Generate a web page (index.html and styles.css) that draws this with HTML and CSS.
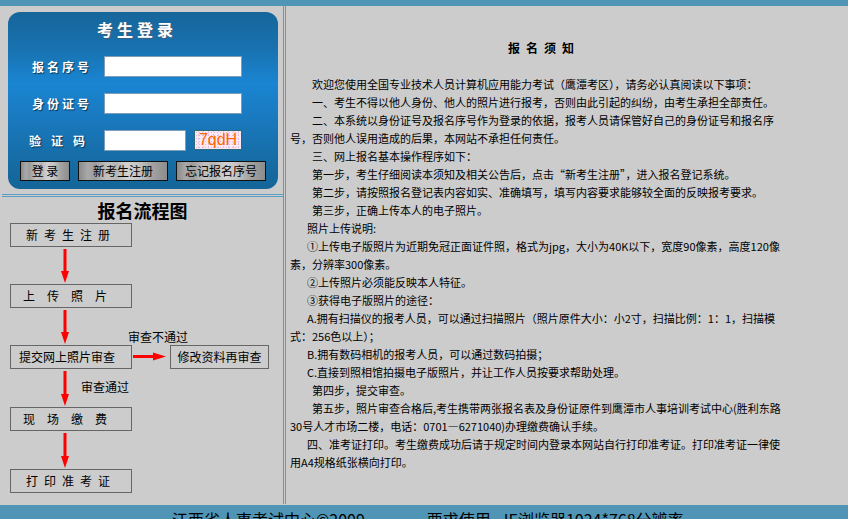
FILE: index.html
```html
<!DOCTYPE html>
<html lang="zh-CN">
<head>
<meta charset="utf-8">
<title>考生登录 - 报名须知</title>
<link rel="stylesheet" href="styles.css">
</head>
<body>
<div class="topbar"></div>
<div class="main">
  <aside class="side">
    <section class="login-wrap">
      <form class="login">
        <h2 class="login-title">考生登录</h2>
        <div class="row"><label class="lbl">报名序号</label><input class="txt" type="text"></div>
        <div class="row"><label class="lbl">身份证号</label><input class="txt" type="text"></div>
        <div class="row"><label class="lbl lbl-code">验证码</label><input class="txt txt-short" type="text"><span class="captcha">7qdH</span></div>
        <div class="btns">
          <button class="btn btn-login" type="button">登 录</button>
          <button class="btn btn-wide" type="button">新考生注册</button>
          <button class="btn btn-wide" type="button">忘记报名序号</button>
        </div>
      </form>
    </section>
    <section class="flow">
      <h3 class="flow-title">报名流程图</h3>
      <div class="chart">
        <div class="step sp6">新考生注册</div>
        <div class="gap">
          <svg class="arrow-down" width="10" height="37" viewBox="0 0 10 37"><rect x="3.5" y="2" width="3" height="24" fill="#ff0000"/><polygon points="1,24 9,24 5,36" fill="#ff0000"/></svg>
        </div>
        <div class="step sp12">上传照片</div>
        <div class="gap">
          <svg class="arrow-down" width="10" height="37" viewBox="0 0 10 37"><rect x="3.5" y="2" width="3" height="24" fill="#ff0000"/><polygon points="1,24 9,24 5,36" fill="#ff0000"/></svg>
        </div>
        <div class="branch">
          <div class="step step-main">提交网上照片审查</div>
          <svg class="arrow-right" width="38" height="24" viewBox="0 0 38 24"><rect x="1" y="10" width="22" height="3" fill="#ff0000"/><polygon points="21,7.5 34,11.5 21,15.5" fill="#ff0000"/></svg>
          <div class="step step-side">修改资料再审查</div>
          <span class="note note-fail">审查不通过</span>
        </div>
        <div class="gap gap-tall">
          <svg class="arrow-down" width="10" height="38" viewBox="0 0 10 38"><rect x="3.5" y="2" width="3" height="25" fill="#ff0000"/><polygon points="1,25 9,25 5,37" fill="#ff0000"/></svg>
          <span class="note note-pass">审查通过</span>
        </div>
        <div class="step sp12">现场缴费</div>
        <div class="gap gap-tall">
          <svg class="arrow-down" width="10" height="38" viewBox="0 0 10 38"><rect x="3.5" y="2" width="3" height="25" fill="#ff0000"/><polygon points="1,25 9,25 5,37" fill="#ff0000"/></svg>
        </div>
        <div class="step sp6">打印准考证</div>
      </div>
    </section>
  </aside>
  <main class="notice">
    <h1 class="notice-title">报名须知</h1>
    <div class="notice-body">
      <p class="p">欢迎您使用全国专业技术人员计算机应用能力考试（鹰潭考区），请务必认真阅读以下事项：</p>
      <p class="p">一、考生不得以他人身份、他人的照片进行报考，否则由此引起的纠纷，由考生承担全部责任。</p>
      <p class="p">二、本系统以身份证号及报名序号作为登录的依据，报考人员请保管好自己的身份证号和报名序<br>号，否则他人误用造成的后果，本网站不承担任何责任。</p>
      <p class="p">三、网上报名基本操作程序如下：</p>
      <p class="p">第一步，考生仔细阅读本须知及相关公告后，点击“新考生注册”，进入报名登记系统。</p>
      <p class="p">第二步，请按照报名登记表内容如实、准确填写，填写内容要求能够较全面的反映报考要求。</p>
      <p class="p">第三步，正确上传本人的电子照片。</p>
      <p class="p2">照片上传说明:</p>
      <p class="p2">①上传电子版照片为近期免冠正面证件照，格式为jpg，大小为40K以下，宽度90像素，高度120像<br>素，分辨率300像素。</p>
      <p class="p2">②上传照片必须能反映本人特征。</p>
      <p class="p2">③获得电子版照片的途径：</p>
      <p class="p2">A.拥有扫描仪的报考人员，可以通过扫描照片（照片原件大小：小2寸，扫描比例：1：1，扫描模<br>式：256色以上）；</p>
      <p class="p2">B.拥有数码相机的报考人员，可以通过数码拍摄；</p>
      <p class="p2">C.直接到照相馆拍摄电子版照片，并让工作人员按要求帮助处理。</p>
      <p class="p">第四步，提交审查。</p>
      <p class="p">第五步，照片审查合格后,考生携带两张报名表及身份证原件到鹰潭市人事培训考试中心(胜利东路<br>30号人才市场二楼，电话：0701—6271040)办理缴费确认手续。</p>
      <p class="p2">四、准考证打印。考生缴费成功后请于规定时间内登录本网站自行打印准考证。打印准考证一律使<br>用A4规格纸张横向打印。</p>
    </div>
  </main>
</div>
<footer class="footer"><span class="copy">江西省人事考试中心©2009</span><span class="req">要求使用</span><span class="browser">IE浏览器1024*768分辨率</span></footer>
</body>
</html>
```

FILE: styles.css
```css
* {
  box-sizing: border-box;
  margin: 0;
  padding: 0;
}

html,
body {
  height: 100%;
  overflow: hidden;
}

body {
  width: 848px;
  background: #cccccc;
  color: #000;
  font-family: "Noto Sans CJK SC", "Noto Sans", sans-serif;
  font-size: 12px;
}

.topbar {
  height: 6px;
  background: #5095b5;
}

.main {
  display: flex;
  height: 499px;
  padding-bottom: 1px;
}

/* ---------- left column ---------- */
.side {
  flex: none;
  width: 284px;
  border-right: 1px solid #5a9cc2;
  display: flex;
  flex-direction: column;
}

.login-wrap {
  margin-left: 2px;
  padding: 6px 0 5px 6px;
  border-bottom: 1px solid #5a9cc2;
}

.login {
  width: 270px;
  height: 177px;
  border-radius: 12px;
  padding-top: 7px;
  background: linear-gradient(180deg, #16669b 0%, #1871ae 20%, #1a85d2 40%, #1a7cc4 55%, #1771ae 75%, #15699f 90%, #146699 100%);
}

.login-title {
  height: 20px;
  line-height: 20px;
  padding-right: 12px;
  text-align: center;
  color: #fff;
  font-size: 16px;
  font-weight: bold;
  letter-spacing: 4px;
  text-shadow: 1px 1px 0 #3b5f7e, -1px 0 0 #4a7190;
}

.row {
  display: flex;
  align-items: flex-start;
  height: 21px;
  margin-top: 17px;
  padding-left: 24px;
}

.row + .row {
  margin-top: 16px;
}

.lbl {
  flex: none;
  width: 72px;
  line-height: 21px;
  color: #fff;
  font-weight: bold;
  font-size: 12px;
  letter-spacing: 3px;
  text-shadow: 1px 1px 1px #0b3555;
}

.lbl-code {
  width: 75px;
  margin-left: -3px;
  letter-spacing: 10px;
}

.txt {
  width: 138px;
  height: 21px;
  border: 1px solid #7f9db9;
  background: #fff;
  outline: none;
}

.txt-short {
  width: 82px;
}

.captcha {
  width: 48px;
  height: 20px;
  margin-left: 8px;
  border: 1px solid #2e6a78;
  background-color: #fbe8f2;
  background-image: radial-gradient(#e9b7d3 0.6px, transparent 0.9px), radial-gradient(#d7c2e8 0.6px, transparent 0.9px);
  background-size: 3px 3px, 5px 4px;
  background-position: 0 0, 1px 2px;
  color: #ff6600;
  font-family: "Liberation Sans", Arial, sans-serif;
  font-size: 16px;
  line-height: 18px;
  text-align: center;
}

.btns {
  display: flex;
  gap: 8px;
  margin-top: 10px;
  padding-left: 12px;
}

.btn {
  height: 20px;
  border: 1px solid #111;
  background: linear-gradient(90deg, #8a8a8a 0%, #a9a9a9 10%, #9c9c9c 18%, #c2c2c2 32%, #b6b6b6 42%, #d2d2d2 55%, #c4c4c4 68%, #a4a4a4 82%, #8c8c8c 100%);
  color: #000;
  font-family: "Noto Sans CJK SC", sans-serif;
  font-size: 12px;
  line-height: 18px;
  cursor: pointer;
}

.btn-login {
  width: 50px;
}

.btn-wide {
  width: 90px;
}

/* ---------- flow chart ---------- */
.flow {
  margin: 1px 0 0 2px;
  padding-top: 2px;
  border-top: 1px solid #5a9cc2;
}

.flow-title {
  height: 22px;
  line-height: 22px;
  text-align: center;
  font-size: 18px;
  font-weight: bold;
}

.chart {
  margin-top: 2px;
  padding-left: 8px;
}

.step {
  width: 122px;
  height: 24px;
  border: 1px solid #666;
  line-height: 22px;
  text-align: center;
  font-size: 12px;
  white-space: nowrap;
}

.sp6 {
  letter-spacing: 6px;
}

.sp12 {
  letter-spacing: 12px;
}

.step-main {
  padding-right: 8px;
}

.step-side {
  width: 99px;
}

.gap {
  position: relative;
  height: 37px;
}

.gap-tall {
  height: 38px;
}

.arrow-down {
  display: block;
  margin-left: 50px;
}

.branch {
  position: relative;
  display: flex;
}

.arrow-right {
  display: block;
  flex: none;
}

.note {
  position: absolute;
  font-size: 12px;
  line-height: 16px;
  white-space: nowrap;
}

.note-fail {
  left: 118px;
  top: -16px;
}

.note-pass {
  left: 71px;
  top: 10px;
}

/* ---------- notice ---------- */
.notice {
  flex: 1;
  margin-left: 1px;
  border-left: 1px solid #5a9cc2;
  padding: 33px 0 0 4px;
}

.notice-title {
  width: 502px;
  padding-left: 6px;
  text-align: center;
  font-size: 12px;
  font-weight: bold;
  line-height: 18px;
  letter-spacing: 6px;
}

.notice-body {
  margin-top: 18px;
  width: 502px;
  line-height: 18px;
  font-size: 11px;
}

.notice-body p {
  white-space: nowrap;
}

.p {
  text-indent: 22px;
}

.p2 {
  text-indent: 17px;
}

/* ---------- footer ---------- */
.footer {
  display: flex;
  height: 14px;
  overflow: hidden;
  background: #5095b5;
  padding: 4px 0 0 172px;
  font-size: 16px;
  line-height: 20px;
  white-space: nowrap;
  color: #000;
}

.req {
  margin-left: 62px;
}

.browser {
  margin-left: 13px;
}
```
